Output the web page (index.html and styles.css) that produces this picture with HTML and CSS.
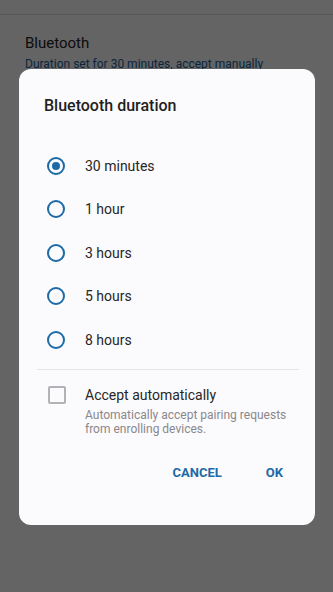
FILE: index.html
```html
<!DOCTYPE html>
<html lang="en">
<head>
    <meta charset="UTF-8">
    <meta name="viewport" content="width=device-width, initial-scale=1.0">
    <link rel="stylesheet" href="styles.css">
</head>
<body>
    <div class="topbar"></div>

    <div class="setting">
        <div class="setting-title">Bluetooth</div>
        <div class="setting-sub">Duration set for 30 minutes, accept manually</div>
    </div>

    <div class="overlay"></div>

    <div class="dialog">
        <h2>Bluetooth duration</h2>

        <div class="options">
            <label class="option"><span class="radio checked"></span>30 minutes</label>
            <label class="option"><span class="radio"></span>1 hour</label>
            <label class="option"><span class="radio"></span>3 hours</label>
            <label class="option"><span class="radio"></span>5 hours</label>
            <label class="option"><span class="radio"></span>8 hours</label>
        </div>

        <hr class="divider">

        <div class="check-row">
            <span class="checkbox"></span>
            <div>
                <div class="check-title">Accept automatically</div>
                <div class="check-sub">Automatically accept pairing requests from enrolling devices.</div>
            </div>
        </div>

        <div class="actions">
            <button>CANCEL</button>
            <button>OK</button>
        </div>
    </div>
</body>
</html>
```

FILE: styles.css
```css
body {
    margin: 0;
    width: 333px;
    height: 592px;
    overflow: hidden;
    position: relative;
    font-family: Roboto, "Noto Sans", sans-serif;
    background-color: #fbfafc;
}

.topbar {
    height: 14px;
    border-bottom: 1px solid #d8d6da;
}

.setting {
    padding: 18px 25px 0;
}

.setting-title {
    font-size: 15px;
    color: #222;
    line-height: 20px;
}

.setting-sub {
    font-size: 12px;
    color: #1a5f9a;
    margin-top: 4px;
}

.overlay {
    position: absolute;
    left: 0;
    top: 0;
    width: 100%;
    height: 100%;
    background-color: rgba(0, 0, 0, 0.6);
}

.dialog {
    position: absolute;
    left: 19px;
    top: 69px;
    width: 296px;
    height: 456px;
    box-sizing: border-box;
    background-color: #fbfafc;
    border-radius: 12px;
    padding: 27px 18px 0 25px;
}

.dialog h2 {
    margin: 0;
    font-size: 16px;
    font-weight: 500;
    color: #1f1f1f;
    line-height: 20px;
}

.options {
    margin-top: 28px;
}

.option {
    display: flex;
    align-items: center;
    height: 43.5px;
    font-size: 14px;
    color: #262626;
}

.radio {
    width: 14px;
    height: 14px;
    border: 2px solid #1c6aa6;
    border-radius: 50%;
    margin: 0 20px 0 3px;
    position: relative;
    flex-shrink: 0;
}

.radio.checked::after {
    content: "";
    position: absolute;
    left: 3px;
    top: 3px;
    width: 8px;
    height: 8px;
    border-radius: 50%;
    background-color: #1c6aa6;
}

.divider {
    border: none;
    border-top: 1px solid #e6e4e8;
    margin: 7px 0 0 -7px;
    width: 262px;
}

.check-row {
    display: flex;
    margin-top: 16px;
}

.checkbox {
    width: 14px;
    height: 14px;
    border: 2px solid #b3b1b5;
    border-radius: 2px;
    margin: 0 19px 0 4px;
    flex-shrink: 0;
}

.check-title {
    font-size: 14px;
    color: #262626;
    line-height: 18px;
}

.check-sub {
    font-size: 12px;
    color: #8a888c;
    line-height: 14px;
    margin-top: 4px;
    width: 210px;
}

.actions {
    display: flex;
    justify-content: flex-end;
    margin-top: 27px;
    gap: 16px;
}

.actions button {
    background: none;
    border: none;
    font-family: inherit;
    font-size: 13px;
    font-weight: 700;
    color: #1c6aa6;
    padding: 0 14px;
    line-height: 20px;
}
```
